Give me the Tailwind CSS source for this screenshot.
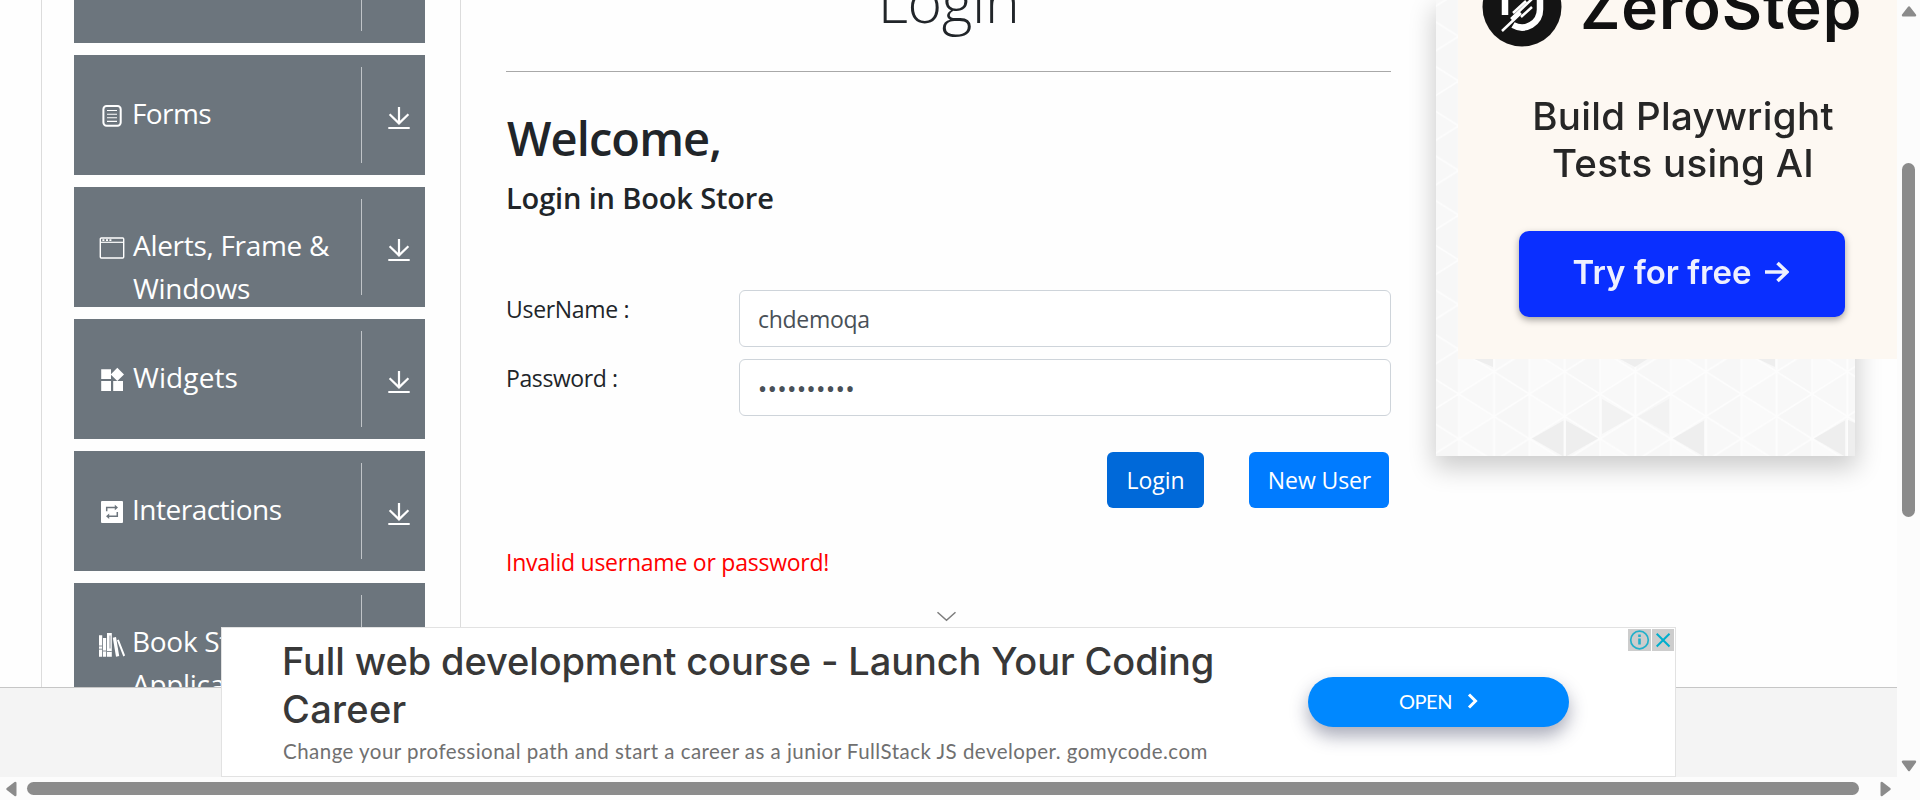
<!DOCTYPE html>
<html lang="en">
<head>
<meta charset="utf-8">
<title>Login</title>
<script src="https://cdn.jsdelivr.net/npm/@tailwindcss/browser@4"></script>
</head>
<body class="relative flex h-[800px] w-[1920px] flex-col overflow-hidden bg-[#fefefe] font-['Open_Sans','Noto_Sans',sans-serif] text-[23px] leading-[36px] text-[#212529]">
<svg class="hidden">
  <symbol id="down" viewBox="0 0 24 24"><path d="M12 1v17M2.6 8.3 12 17.4l9.4-9.1M1.3 22h21.4" fill="none" stroke="#fff" stroke-width="2.2"/></symbol>
</svg>
<div class="flex h-[777px]">
  <div class="flex h-[777px] w-[1897px] flex-col overflow-hidden">
    <div class="flex h-[687px] overflow-hidden">
      <!-- Sidebar -->
      <aside class="ml-[41px] h-full w-[420px] shrink-0 overflow-hidden border-x border-[#dcdcdc] pl-8">
        <nav class="-mt-[77px] flex w-[351px] flex-col gap-3 text-[28px] leading-[43px] tracking-[-0.3px] text-white">
          <div class="flex h-[120px] shrink-0 overflow-hidden bg-[#6c757d]">
            <div class="w-[287px]"></div>
            <div class="mt-3 flex h-24 border-l border-[#c0c4c8]"></div>
          </div>
          <div class="flex h-[120px] shrink-0 overflow-hidden bg-[#6c757d]">
            <div class="flex w-[287px] gap-[7px] pl-[25px]">
              <svg class="mt-12 size-[26px] shrink-0" viewBox="0 0 26 26" fill="none" stroke="#fff"><rect x="4.4" y="3" width="17.3" height="19.8" rx="3.2" stroke-width="2"/><path d="M8 7.5h10M8 11.3h10M8 14.8h10M8 18.4h10" stroke-width="1.1"/></svg>
              <span class="mt-[37px] tracking-[-0.6px]">Forms</span>
            </div>
            <div class="mt-3 flex h-24 border-l border-[#c0c4c8] pt-[39px] pl-[25px]"><svg class="size-6"><use href="#down"/></svg></div>
          </div>
          <div class="flex h-[120px] shrink-0 overflow-hidden bg-[#6c757d]">
            <div class="flex w-[287px] gap-1.5 pl-[25px]">
              <svg class="mt-12 size-[26px] shrink-0" viewBox="0 0 26 26" fill="none" stroke="#fff"><rect x="1.3" y="3" width="23.4" height="20" rx="1" stroke-width="1.4"/><path d="M1.5 7.3h23" stroke-width="1.2"/><path d="M3.4 5.1h2M7 5.1h2M10.4 5.1h2" stroke-width="1.8"/></svg>
              <span class="mt-[37px] pl-0.5 whitespace-nowrap">Alerts, Frame &amp;<br>Windows</span>
            </div>
            <div class="mt-3 flex h-24 border-l border-[#c0c4c8] pt-[39px] pl-[25px]"><svg class="size-6"><use href="#down"/></svg></div>
          </div>
          <div class="flex h-[120px] shrink-0 overflow-hidden bg-[#6c757d]">
            <div class="flex w-[287px] gap-1.5 pl-[25px]">
              <svg class="mt-12 size-[26px] shrink-0" viewBox="0 0 26 26" fill="#fff"><path d="M2.2 2.3h9.8v9.8H2.2zM2.2 14.1h9.8v9.8H2.2zM14.2 14.1H24v9.8h-9.8zM18.3.8l6.7 6.6-6.7 6.7-6.6-6.7z"/></svg>
              <span class="mt-[37px] pl-0.5 tracking-[0.1px]">Widgets</span>
            </div>
            <div class="mt-3 flex h-24 border-l border-[#c0c4c8] pt-[39px] pl-[25px]"><svg class="size-6"><use href="#down"/></svg></div>
          </div>
          <div class="flex h-[120px] shrink-0 overflow-hidden bg-[#6c757d]">
            <div class="flex w-[287px] gap-[7px] pl-[25px]">
              <svg class="mt-12 size-[26px] shrink-0" viewBox="0 0 26 26" fill="none"><rect x="2" y="2" width="22" height="22" rx="1" fill="#fff"/><path d="M7.7 12.3V8.6h9M18.3 13v4.2h-9" stroke="#6c757d" stroke-width="1.5"/><path d="M15.8 5.8 19 8.6l-3.2 2.7zM10.2 14.5 7 17.2l3.2 2.7z" fill="#6c757d"/></svg>
              <span class="mt-[37px] tracking-[-0.5px]">Interactions</span>
            </div>
            <div class="mt-3 flex h-24 border-l border-[#c0c4c8] pt-[39px] pl-[25px]"><svg class="size-6"><use href="#down"/></svg></div>
          </div>
          <div class="flex h-[120px] shrink-0 overflow-hidden bg-[#6c757d]">
            <div class="flex w-[287px] gap-[7px] pl-[25px]">
              <svg class="mt-12 size-[26px] shrink-0" viewBox="0 0 26 26" fill="#fff"><path d="M0 4.3h3.2v21.4H0zM4 7h3.2v18.7H4zM8 2h4.8v23.7H8zM13.8 6.8l3.2-.7 3.2 19-3.2.6zM18 9.2l1.8-.7 6.3 16-1.8.9z"/><path d="M0 15h3.2M0 18.2h3.2M4 20h3.2M11 4.5v13M8 20.5h4.8" stroke="#6c757d" stroke-width=".8" fill="none"/></svg>
              <span class="mt-[37px]">Book Store<br>Application</span>
            </div>
            <div class="mt-3 flex h-24 border-l border-[#c0c4c8] pt-[39px] pl-[25px]"><svg class="size-6"><use href="#down"/></svg></div>
          </div>
        </nav>
      </aside>
      <!-- Login form -->
      <main class="ml-[45px] w-[885px] shrink-0">
        <h1 class="-mt-[36px] h-[71px] text-center text-[59px] leading-[72px] font-light tracking-[-0.4px]">Login</h1>
        <hr class="mt-9 border-[#a8a8a8]">
        <h2 class="mt-[37px] h-[58px] pl-px text-[47px] leading-[58px] font-semibold tracking-[-0.9px]">Welcome,</h2>
        <h5 class="mt-[13px] h-9 text-[29px] leading-9 font-semibold tracking-[-0.15px]">Login in Book Store</h5>
        <div class="mt-[74px] flex">
          <label class="w-[233px] pt-px tracking-[-0.3px]">UserName :</label>
          <div class="h-[57px] w-[652px] rounded-[6px] border border-[#ced4da] bg-white pt-2.5 pl-[18px] tracking-[-0.3px] text-[#495057]">chdemoqa</div>
        </div>
        <div class="mt-3 flex">
          <label class="w-[233px] pt-px tracking-[-0.4px]">Password :</label>
          <div class="h-[57px] w-[652px] rounded-[6px] border border-[#ced4da] bg-white pt-[11px] pl-[18px] font-['Noto_Sans',sans-serif] text-[24px] tracking-[0.7px] text-[#495057]">••••••••••</div>
        </div>
        <div class="mt-9 flex justify-end gap-[45px] pr-0.5 text-white">
          <div class="h-14 w-[97px] rounded-[6px] bg-[#0069d9] pt-2.5 text-center">Login</div>
          <div class="h-14 w-[140px] rounded-[6px] bg-[#007bff] pt-2.5 pl-px text-center tracking-[-0.1px]">New User</div>
        </div>
        <p class="mt-9 tracking-[-0.24px] text-[#ff0000]">Invalid username or password!</p>
      </main>
      <!-- Sponsor panel -->
      <aside class="relative ml-[45px] h-[456px] w-[419px] shrink-0 bg-[#f8f8f8] shadow-[0_10px_24px_2px_rgba(0,0,0,0.2)]">
        <svg class="absolute inset-0" width="419" height="456">
          <defs>
            <pattern id="tri" x="22.7" y="394" width="70.66" height="44.7" patternUnits="userSpaceOnUse">
              <path d="M0 0 35.33 22.35 0 44.7z" fill="#fafafa"/><path d="M70.66 0 35.33 22.35 70.66 44.7z" fill="#f7f7f7"/>
              <path d="M0 0v44.7M35.33 0v44.7M70.66 0v44.7M0 0l70.66 44.7M70.66 0 0 44.7" stroke="#fdfdfd" stroke-width="1.6" fill="none"/>
            </pattern>
          </defs>
          <rect width="419" height="456" fill="url(#tri)"/>
          <g fill="#eeeeee">
            <path d="M96 438.5l31.5-18v36zM130 420.5l32 18-32 18zM237 438.5l31-18v36zM378 438.5l31-18v36zM412 420l7 3v33h-7z"/>
            <path d="M36 358h21v9zM182 358h31l-14 9zM320 358h19v9z"/>
            <path d="M166 399l31 17.5-31 17.5zM202 416.5l31-17.5v35z" fill="#f2f2f2"/>
          </g>
        </svg>
        <div class="absolute top-0 left-[22px] flex h-[359px] w-[439px] flex-col items-center overflow-hidden bg-[#fdf8f2] font-['Inter',sans-serif] text-[#262626]">
          <div class="-mt-[33px] flex h-20 w-[390px] shrink-0 items-center self-start pl-6 blur-[0.6px]">
            <svg class="size-20 shrink-0" viewBox="0 0 80 80"><circle cx="40" cy="40" r="39.5" fill="#141414"/><path d="M23 22v26M58 22v20a18 18 0 0 1-27 16" fill="none" stroke="#fff" stroke-width="6.5"/><path d="M20 64 39 46M29 52 51 31M31 46 44 34M39 50 50 40" stroke="#fff" stroke-width="2.5"/></svg>
            <span class="ml-[18px] text-[62px] leading-[76px] font-semibold tracking-[0.9px] text-[#111]">ZeroStep</span>
          </div>
          <p class="mt-[46px] ml-[11px] text-center text-[38.5px] leading-[47px] font-medium tracking-[0.3px] whitespace-nowrap blur-[0.7px]">Build Playwright<br>Tests using AI</p>
          <div class="mt-11 ml-[9px] flex h-[86px] w-[326px] shrink-0 items-center justify-center gap-3 self-center rounded-[10px] bg-[#0a2fff] pr-[3px] pb-[5px] text-[33px] font-semibold text-[#eef0ff] shadow-[0_3px_7px_rgba(0,0,0,0.35)] blur-[0.6px]">
            <span>Try for free</span>
            <svg class="h-[22px] w-[25px]" viewBox="0 0 25 22"><path d="M1 11h21M13.5 2l9.5 9-9.5 9" fill="none" stroke="#eef0ff" stroke-width="3.6"/></svg>
          </div>
        </div>
      </aside>
    </div>
    <footer class="h-[90px] border-t border-[#c6c6c6] bg-[#f4f4f4]"></footer>
  </div>
  <!-- Vertical scrollbar -->
  <div class="relative z-10 flex w-[23px] flex-col items-center bg-[#fcfcfc] pt-1.5">
    <svg class="h-[11px] w-4 shrink-0" viewBox="0 0 16 11"><path d="M8 1.5 14 9.3H2z" fill="#8b8b8b" stroke="#8b8b8b" stroke-width="2.4" stroke-linejoin="round"/></svg>
    <div class="mt-[146px] h-[354px] w-[13px] shrink-0 rounded-full bg-[#8b8b8b]"></div>
    <svg class="mt-[243px] h-3 w-4 shrink-0" viewBox="0 0 16 12"><path d="M2 1.7h12L8 10z" fill="#8b8b8b" stroke="#8b8b8b" stroke-width="2.4" stroke-linejoin="round"/></svg>
  </div>
</div>
<!-- Horizontal scrollbar -->
<div class="flex h-[23px] items-center bg-[#fcfcfc] pl-1.5">
  <svg class="h-4 w-[11px]" viewBox="0 0 11 16"><path d="M1.5 8 9.3 2v12z" fill="#8b8b8b" stroke="#8b8b8b" stroke-width="2.4" stroke-linejoin="round"/></svg>
  <div class="ml-2.5 h-[13px] w-[1832px] rounded-full bg-[#8b8b8b]"></div>
  <svg class="ml-[21px] h-4 w-[11px]" viewBox="0 0 11 16"><path d="M9.5 8 1.7 2v12z" fill="#8b8b8b" stroke="#8b8b8b" stroke-width="2.4" stroke-linejoin="round"/></svg>
</div>
<!-- Anchored advert -->
<svg class="absolute top-[611px] left-[936px] h-[11px] w-[21px]" viewBox="0 0 21 11"><path d="M1.5 1.2 10.5 9.3l9-8.1" fill="none" stroke="#7d7d7d" stroke-width="1.5"/></svg>
<section class="absolute top-[627px] left-[221px] flex h-[150px] w-[1455px] border border-[#e2e2e2] bg-white">
  <div class="w-[1086px] pt-[9px] pl-[60px]">
    <h3 class="font-['Inter',sans-serif] text-[38px] leading-[48px] font-medium tracking-[-0.11px] text-[#383838]">Full web development course - Launch Your Coding<br><span class="tracking-[0.3px]">Career</span></h3>
    <p class="mt-[3px] pl-px font-['Lato',sans-serif] text-[20.5px] leading-[30px] tracking-[0.47px] whitespace-nowrap text-[#707070]">Change your professional path and start a career as a junior FullStack JS developer. gomycode.com</p>
  </div>
  <div class="mt-[49px] flex h-[50px] w-[261px] items-center justify-center gap-[15px] rounded-full bg-[#0088ff] pb-[3px] font-['Lato',sans-serif] text-[20px] text-white shadow-[0_9px_18px_rgba(40,45,80,0.4)]">
    <span class="tracking-[-0.5px]">OPEN</span>
    <svg class="h-4 w-[11px]" viewBox="0 0 11 16"><path d="M2 1.5 8.5 8 2 14.5" fill="none" stroke="#fff" stroke-width="3"/></svg>
  </div>
  <div class="absolute top-px right-px flex gap-px">
    <svg class="h-[22px] w-[23px] bg-[#cdcdcd]" viewBox="0 0 23 22"><circle cx="11.5" cy="11" r="8.8" fill="none" stroke="#22b0ca" stroke-width="1.7"/><path d="M11.5 9.5v6M11.5 5.6v2.4" stroke="#22b0ca" stroke-width="2.6"/></svg>
    <svg class="h-[22px] w-[22px] bg-[#cdcdcd]" viewBox="0 0 22 22"><path d="M4.7 4.7l12.8 12.8M17.5 4.7 4.7 17.5" stroke="#00aecd" stroke-width="2" fill="none"/></svg>
  </div>
</section>
</body>
</html>
